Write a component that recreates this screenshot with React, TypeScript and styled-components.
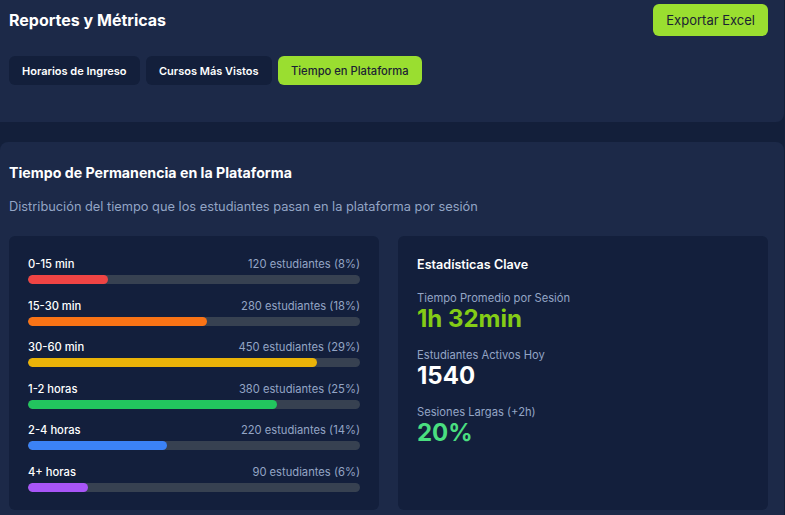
import React from "react";
import styled, { createGlobalStyle } from "styled-components";

const Global = createGlobalStyle`
  html, body { margin: 0; padding: 0; background: #131f3a; }
  body { font-family: Inter, "Noto Sans", "Liberation Sans", sans-serif; color: #ffffff; }
  * { box-sizing: border-box; }
`;

const Page = styled.div`
  width: 785px;
  display: flex;
  flex-direction: column;
  gap: 20px;
`;

const Panel = styled.section`
  width: 784px;
  background: #1c2948;
  border-radius: 0 0 8px 0;
  padding: 4px 16px 37px 9px;
`;

const HeaderRow = styled.div`
  display: flex;
  align-items: center;
  justify-content: space-between;
  height: 32px;
`;

const Title = styled.h1`
  margin: 0;
  font-size: 16px;
  font-weight: 700;
  line-height: 22px;
`;

const GreenButton = styled.button`
  height: 32px;
  padding: 0 13px;
  border: none;
  border-radius: 6px;
  background: #9ade30;
  color: #1a2233;
  font-family: inherit;
  font-size: 13px;
  font-weight: 400;
`;

const Tabs = styled.div`
  display: flex;
  gap: 6.5px;
  margin-top: 20px;
`;

const Tab = styled.button<{ $active?: boolean }>`
  height: 29px;
  padding: 0 13px;
  border: none;
  border-radius: 6px;
  background: ${(p) => (p.$active ? "#9ade30" : "#131f3b")};
  color: ${(p) => (p.$active ? "#1a2233" : "#ffffff")};
  font-family: inherit;
  font-size: ${(p) => (p.$active ? "11.2px" : "11px")};
  font-weight: ${(p) => (p.$active ? 500 : 600)};
`;

const ContentPanel = styled.section`
  width: 784px;
  background: #1c2948;
  border-radius: 8px 8px 0 0;
  padding: 21px 16px 10px 9px;
`;

const SectionTitle = styled.h2`
  margin: 0;
  font-size: 14.2px;
  font-weight: 700;
  line-height: 20px;
`;

const Subtitle = styled.p`
  margin: 14px 0 0;
  font-size: 12.8px;
  line-height: 20px;
  color: #93a5c5;
`;

const Grid = styled.div`
  display: grid;
  grid-template-columns: 370px 370px;
  gap: 19px;
  margin-top: 19px;
`;

const Card = styled.div`
  background: #131f3c;
  border-radius: 6px;
  padding: 20px 19px;
  height: 274px;
`;

const BarList = styled.div`
  display: flex;
  flex-direction: column;
  gap: 13.5px;
`;

const BarRow = styled.div`
  display: flex;
  flex-direction: column;
  gap: 3px;
`;

const BarLabels = styled.div`
  display: flex;
  justify-content: space-between;
  font-size: 11.2px;
  line-height: 16px;
`;

const BarName = styled.span`
  color: #ffffff;
  font-weight: 500;
`;

const BarCount = styled.span`
  color: #93a5c5;
`;

const Track = styled.div`
  height: 9px;
  border-radius: 5px;
  background: #374151;
  overflow: hidden;
`;

const Fill = styled.div<{ $color: string }>`
  height: 100%;
  border-radius: 5px;
  background: ${(p) => p.$color};
`;

const StatsTitle = styled.h3`
  margin: 0 0 16px;
  font-size: 12.6px;
  font-weight: 600;
  line-height: 18px;
`;

const Stat = styled.div`
  display: flex;
  flex-direction: column;
  & + & {
    margin-top: 16px;
  }
`;

const StatLabel = styled.span`
  font-size: 11.2px;
  line-height: 16px;
  color: #93a5c5;
`;

const StatValue = styled.span<{ $color: string }>`
  font-size: 24px;
  line-height: 25px;
  font-weight: 700;
  color: ${(p) => p.$color};
`;

const bars = [
  { name: "0-15 min", count: 120, pct: 8, color: "#ef4444" },
  { name: "15-30 min", count: 280, pct: 18, color: "#f97316" },
  { name: "30-60 min", count: 450, pct: 29, color: "#eab308" },
  { name: "1-2 horas", count: 380, pct: 25, color: "#22c55e" },
  { name: "2-4 horas", count: 220, pct: 14, color: "#3b82f6" },
  { name: "4+ horas", count: 90, pct: 6, color: "#a855f7" },
];

const stats = [
  { label: "Tiempo Promedio por Sesión", value: "1h 32min", color: "#84cc16" },
  { label: "Estudiantes Activos Hoy", value: "1540", color: "#ffffff" },
  { label: "Sesiones Largas (+2h)", value: "20%", color: "#4ade80" },
];

export default function App() {
  return (
    <Page>
      <Global />
      <Panel>
        <HeaderRow>
          <Title>Reportes y Métricas</Title>
          <GreenButton>Exportar Excel</GreenButton>
        </HeaderRow>
        <Tabs>
          <Tab>Horarios de Ingreso</Tab>
          <Tab>Cursos Más Vistos</Tab>
          <Tab $active>Tiempo en Plataforma</Tab>
        </Tabs>
      </Panel>
      <ContentPanel>
        <SectionTitle>Tiempo de Permanencia en la Plataforma</SectionTitle>
        <Subtitle>
          Distribución del tiempo que los estudiantes pasan en la plataforma por sesión
        </Subtitle>
        <Grid>
          <Card>
            <BarList>
              {bars.map((b) => (
                <BarRow key={b.name}>
                  <BarLabels>
                    <BarName>{b.name}</BarName>
                    <BarCount>
                      {b.count} estudiantes ({b.pct}%)
                    </BarCount>
                  </BarLabels>
                  <Track>
                    <Fill $color={b.color} style={{ width: `${b.pct * 3}%` }} />
                  </Track>
                </BarRow>
              ))}
            </BarList>
          </Card>
          <Card>
            <StatsTitle>Estadísticas Clave</StatsTitle>
            {stats.map((s) => (
              <Stat key={s.label}>
                <StatLabel>{s.label}</StatLabel>
                <StatValue $color={s.color}>{s.value}</StatValue>
              </Stat>
            ))}
          </Card>
        </Grid>
      </ContentPanel>
    </Page>
  );
}
